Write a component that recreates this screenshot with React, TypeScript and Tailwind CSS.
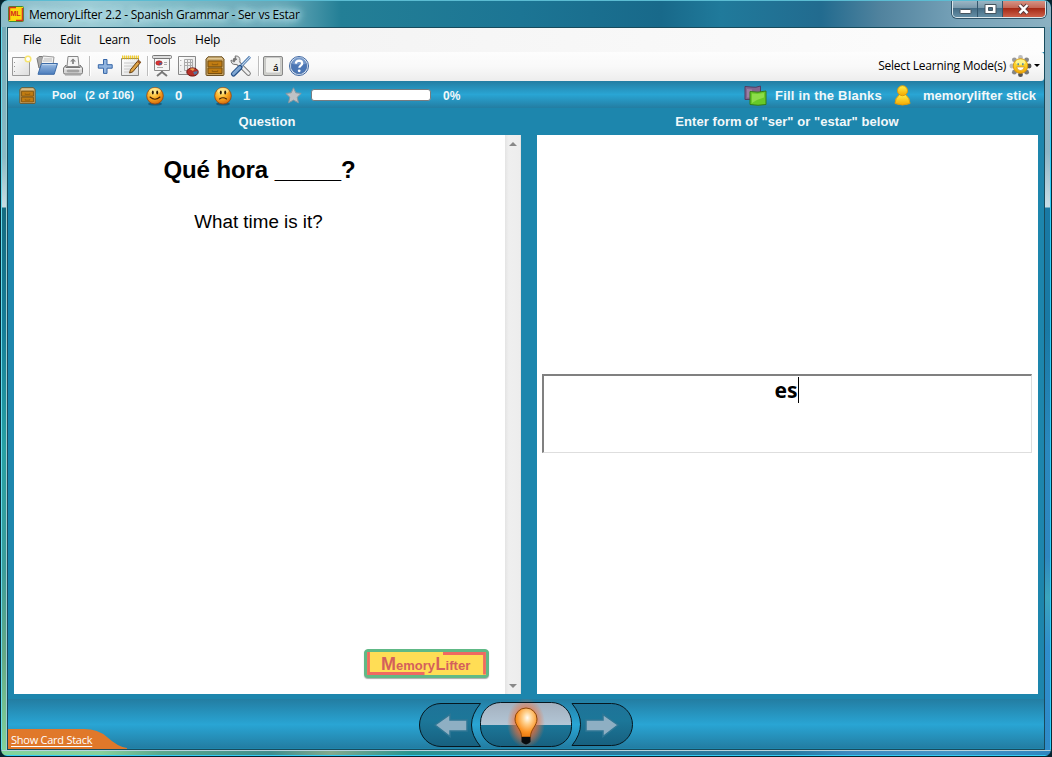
import type { ReactNode } from "react";

const ui = "font-['Open_Sans','Noto_Sans',sans-serif]";
const arial = "font-['Liberation_Sans',Arial,sans-serif]";

function Defs() {
  return (
    <svg className="absolute h-0 w-0" aria-hidden="true">
      <defs>
        <radialGradient id="face" cx="0.4" cy="0.3" r="0.75">
          <stop offset="0" stopColor="#ffe97a" />
          <stop offset="0.5" stopColor="#fbab22" />
          <stop offset="1" stopColor="#cf640c" />
        </radialGradient>
        <linearGradient id="paper" x1="0" y1="0" x2="1" y2="1">
          <stop offset="0" stopColor="#ffffff" />
          <stop offset="1" stopColor="#dcdcdc" />
        </linearGradient>
        <linearGradient id="blue" x1="0" y1="0" x2="0" y2="1">
          <stop offset="0" stopColor="#9dbde3" />
          <stop offset="1" stopColor="#4a7cbc" />
        </linearGradient>
        <linearGradient id="gold" x1="0" y1="0" x2="0" y2="1">
          <stop offset="0" stopColor="#fff04a" />
          <stop offset="1" stopColor="#f5a800" />
        </linearGradient>
        <linearGradient id="dim" x1="0" y1="0" x2="0" y2="1">
          <stop offset="0" stopColor="#1f7398" />
          <stop offset="0.4" stopColor="#1c7799" />
          <stop offset="1" stopColor="#17607f" />
        </linearGradient>
        <linearGradient id="shine" x1="0" y1="0" x2="0" y2="1">
          <stop offset="0" stopColor="#a3b0be" />
          <stop offset="1" stopColor="#b3c6d6" />
        </linearGradient>
        <linearGradient id="lower" x1="0" y1="0" x2="0" y2="1">
          <stop offset="0.5" stopColor="#1c7799" />
          <stop offset="1" stopColor="#17607f" />
        </linearGradient>
        <radialGradient id="bulb" cx="0.56" cy="0.34" r="0.6">
          <stop offset="0" stopColor="#fffdf5" />
          <stop offset="0.35" stopColor="#ffd08c" />
          <stop offset="0.8" stopColor="#fb9426" />
          <stop offset="1" stopColor="#ef8117" />
        </radialGradient>
        <radialGradient id="glow">
          <stop offset="0.3" stopColor="#ff6a20" stopOpacity="1" />
          <stop offset="0.65" stopColor="#f0703a" stopOpacity="0.55" />
          <stop offset="1" stopColor="#f0703a" stopOpacity="0" />
        </radialGradient>
      </defs>
    </svg>
  );
}

function Cabinet({ size }: { size: number }) {
  return (
    <svg width={size} height={size} viewBox="0 0 20 20">
      <path d="M3 .8h14l2 2.4v15.3q0 1-1 1H2q-1 0-1-1V3.2z" fill="#c7a568" stroke="#6d5020" />
      <path d="M3.4 1.8h13.2l1 1.5H2.4z" fill="#e0c795" />
      <path d="M3 5h14v5.8H3zM3 12h14v5.5H3z" fill="#c17c12" stroke="#7a500e" />
      <path d="M7.300 7.500v1.200h5.400V7.500M7.300 14.300v1.200h5.400v-1.200" fill="none" stroke="#8a5a10" strokeWidth=".9" />
    </svg>
  );
}

function Face({ sad = false }: { sad?: boolean }) {
  return (
    <svg width="20" height="20" viewBox="0 0 20 20">
      <ellipse cx="10" cy="18" rx="7" ry="1.6" fill="#0b4560" opacity=".6" />
      <circle cx="10" cy="9.8" r="8.3" fill="url(#face)" stroke="#9a4208" strokeWidth=".8" />
      <ellipse cx="10" cy="4.8" rx="5.800" ry="3" fill="#fff5a8" opacity=".65" />
      <ellipse cx="7.800" cy="6.600" rx="1" ry="2" fill="#2c1804" />
      <ellipse cx="12.2" cy="6.600" rx="1" ry="2" fill="#2c1804" />
      <path
        d={sad ? "M6.500 13q3.500-2.400 7 0" : "M5 11q5 4.400 10 0"}
        fill="none" stroke="#4a2504" strokeWidth="1.1" strokeLinecap="round"
      />
    </svg>
  );
}

function Tool({ label, children, className }: { label: string; children: ReactNode; className: string }) {
  return (
    <button aria-label={label} className={`block shrink-0 ${className}`}>
      <svg width="24" height="24" viewBox="0 0 24 24">{children}</svg>
    </button>
  );
}

function TitleBar() {
  return (
    <header className="relative flex h-[27px] shrink-0 items-start overflow-hidden rounded-t-[7px] border-t border-[#5bbcd2] bg-[linear-gradient(90deg,#8dbcc9_0,#9ccbd5_90px,#7eb9c5_180px,#63a6b6_285px,#237f96_340px,#1c7594_520px,#18698a_660px,#207a9b_720px,#226b8f_820px,#51839e_880px,#78a3b9_960px,#8bb1c2_1050px)]">
      <div className="flex h-[26px] items-center pl-[7px]">
        <svg width="16" height="16" viewBox="0 0 16 16">
          <rect x=".5" y=".5" width="15" height="15" rx="1" fill="#fbd90d" stroke="#3b8b38" />
          <path d="M1.500 14V1.500H8M8 14.500h6.500V2" fill="none" stroke="#d63217" strokeWidth="1.500" />
          <text x="2.500" y="10.300" fontSize="7" fontWeight="700" fill="#d5281c" fontFamily="Liberation Sans">ML</text>
        </svg>
        <h1 className={`${ui} relative ml-[5px] w-[278px] whitespace-nowrap pt-px text-[12px] leading-[18px] tracking-[-0.23px] text-black [text-shadow:0_0_6px_#c6e9f0,0_0_8px_#c6e9f0,0_0_10px_#b4dce5,0_0_12px_#b4dce5]`}>
          MemoryLifter 2.2 - Spanish Grammar - Ser vs Estar
        </h1>
      </div>
      <div className="ml-auto mr-[5px] mt-[-1px] flex h-[18px] w-[94px] overflow-hidden rounded-b-[5px] border border-t-0 border-[#dce9ed] shadow-[0_0_0_1px_#305368]">
        <button aria-label="Minimize" className="flex h-full w-[25px] items-center justify-center border-r border-[#32566c] bg-[linear-gradient(#a0bac8_0,#7898aa_48%,#456d85_50%,#638da4)]">
          <svg width="13" height="14"><rect x="1" y="7.500" width="11" height="4" rx=".5" fill="#fff" stroke="#46555f" /></svg>
        </button>
        <button aria-label="Restore" className="flex h-full w-[25px] items-center justify-center border-r border-[#32566c] bg-[linear-gradient(#a0bac8_0,#7898aa_48%,#456d85_50%,#638da4)]">
          <svg width="13" height="14"><path d="M1 2.500h11v9H1zM4.500 5.500h4v3h-4z" fill="#fff" fillRule="evenodd" stroke="#46555f" /></svg>
        </button>
        <button aria-label="Close" className="flex h-full flex-1 items-center justify-center bg-[linear-gradient(#d79a8c_0,#c46452_48%,#a52a16_50%,#cc6049)] pr-[2px]">
          <svg width="15" height="14"><path d="m3.500 3 8 8.200m0-8.200-8 8.200" stroke="#593a3c" strokeWidth="4.300" /><path d="m3.500 3 8 8.200m0-8.200-8 8.200" stroke="#fff" strokeWidth="2.500" /></svg>
        </button>
      </div>
    </header>
  );
}

function MenuBar() {
  return (
    <nav className={`${ui} flex h-6 shrink-0 items-center bg-gradient-to-r from-[#f0f0f0] to-[#fdfdfd] pl-[15px] text-[12px] tracking-[-0.2px] text-black`}>
      <span className="w-[37px]">File</span>
      <span className="w-[39px]">Edit</span>
      <span className="w-12">Learn</span>
      <span className="w-12">Tools</span>
      <span>Help</span>
    </nav>
  );
}

function Toolbar() {
  return (
    <div className="flex h-[29px] shrink-0 items-center rounded-r-[3px] bg-gradient-to-b from-[#fdfdfd] via-[#f9f9f9] to-[#ededed] pb-[2px] pl-px">
      <Tool label="New" className="w-[26px]">
        <path d="M3.500 3.500h17v18h-17z" fill="url(#paper)" stroke="#999" />
        <path d="M5.500 8v1m0 3v1m0 4v1" stroke="#999" />
        <circle cx="19" cy="5" r="2.800" fill="#fff" stroke="#f7e56e" strokeWidth="1.500" />
      </Tool>
      <Tool label="Open" className="w-[26px]">
        <path d="M2 4.500 4 2.500h5l1 1.500h8v10H4z" fill="#aaa" stroke="#777" />
        <path d="m7 5 1-3 11 1-1 8H6z" fill="#f2f2f2" stroke="#999" />
        <path d="M9 5h8M8 7h9" stroke="#bbb" />
        <path d="M6.500 9.500h16l-3.300 10.800H3z" fill="url(#blue)" stroke="#3c6ba8" />
        <path d="M7.300 10.600H21" stroke="#c4d9ef" />
      </Tool>
      <Tool label="Print" className="w-[28px]">
        <path d="M7 2.500h10l1 10H6z" fill="#f5f5f5" stroke="#888" />
        <path d="M12 5v5" stroke="#888" strokeWidth="1.800" />
        <path d="m9 7.500 3-3 3 3z" fill="#888" />
        <path d="m5 11-2.500 3v4.500q0 1.500 1.500 1.500h16q1.500 0 1.500-1.500V14L19 11v2.500H5z" fill="#d5d5d5" stroke="#777" />
        <path d="M3.500 14.800h17" stroke="#fff" />
        <rect x="6" y="16" width="12" height="2" rx="1" fill="#aaa" stroke="#888" strokeWidth=".5" />
        <path d="M4 21h16" stroke="#999" />
      </Tool>
      <Separator />
      <Tool label="Add" className="ml-[3px] w-[26px]">
        <path d="M10.500 5.500h3.500v5.200h5.200v3.500H14v5.200h-3.500v-5.200H5.300v-3.500h5.200z" fill="#91b4df" stroke="#3767a8" />
      </Tool>
      <Tool label="Edit" className="w-[28px]">
        <path d="M2.500 4.500h17v17h-17z" fill="url(#paper)" stroke="#888" />
        <path d="M5 9h12M5 12h12M5 15h10M5 18h9" stroke="#c8c8c8" />
        <path d="M3 3.500h17" stroke="#c49a09" strokeWidth="3.600" strokeDasharray="1.200 .8" />
        <path d="M3 3h17" stroke="#f3d12f" strokeWidth="2.400" strokeDasharray="1.200 .8" />
        <path d="m19.400 6.200 2.400 2-8 9.600-3.200 1.200.8-3.200z" fill="#dfa344" stroke="#664010" />
        <path d="m19.400 6.200 2.400 2-1.400 1.600-2.500-2z" fill="#9b5a2b" />
      </Tool>
      <Separator />
      <Tool label="Presentation" className="ml-[2px] w-[26px]">
        <path d="M12 16v3M7 22l5-4 5 4" fill="none" stroke="#777" strokeWidth="2" />
        <path d="M4.500 4.500h15v12h-15z" fill="#f6f6f6" stroke="#888" />
        <rect x="2.500" y="1.500" width="19" height="3" rx="1" fill="#ddd" stroke="#777" />
        <ellipse cx="9" cy="9" rx="3.200" ry="2.200" fill="#d33" stroke="#922" strokeWidth=".6" />
        <path d="m9 9 3-.5q0 2-2 2.400z" fill="#36a" />
        <path d="M14 8.500h3M14 10.500h3M7 13.500h6" stroke="#aaa" />
      </Tool>
      <Tool label="Statistics" className="w-[27px]">
        <path d="M2.500 2.500h17v18h-17z" fill="url(#paper)" stroke="#888" />
        <path d="M8.500 5.500h8v11h-8zM11.500 5.500v11M14.500 5.500v11M8 8.500h9M8 11.500h9" fill="none" stroke="#aaa" />
        <path d="M4.800 6v1m0 4v1m0 5v1" stroke="#999" />
        <ellipse cx="16.500" cy="18" rx="5.700" ry="4.100" fill="#b72f28" stroke="#701714" />
        <path d="m17 17-3.400-2q3-1.600 5 0z" fill="#eaa04b" />
        <path d="m17 18 4.500-1q.5 3-3 3.800z" fill="#5277a3" />
      </Tool>
      <button aria-label="Card boxes" className="flex w-[26px] shrink-0 pl-[2px]"><Cabinet size={20} /></button>
      <Tool label="Options" className="w-[29px]">
        <path d="m6 6 13.500 13.500" stroke="#777" strokeWidth="4.600" strokeLinecap="round" />
        <path d="M6 2q5-.5 5 4.500t-5 4q-4 0-4-4.500l3 2 2.500-2z" fill="#e6e6e6" stroke="#777" />
        <path d="m7.500 7.500 12 12" stroke="#eee" strokeWidth="2.800" strokeLinecap="round" />
        <path d="m21 2.800-9.600 10" stroke="#4372ab" strokeWidth="2.800" />
        <path d="m21 2.800-9.600 10" stroke="#c5d8eb" strokeWidth="1.200" />
        <path d="m11 13.500-6.500 6.500" stroke="#244f87" strokeWidth="5.200" strokeLinecap="round" />
        <path d="m10.800 13.500-6.300 6.300" stroke="#7fa7d3" strokeWidth="3" strokeLinecap="round" />
      </Tool>
      <Separator />
      <Tool label="Character map" className="ml-[2px] w-[26px]">
        <rect x="2.500" y="2.500" width="19" height="19" rx="1.500" fill="#cfd0cb" stroke="#888" />
        <rect x="4.500" y="3.500" width="15" height="15.500" rx="1.500" fill="#f1f1ee" stroke="#bbb" strokeWidth=".7" />
        <text x="12" y="16.500" fontSize="9.500" fontWeight="600" fontFamily="Open Sans">á</text>
      </Tool>
      <Tool label="Help" className="w-[26px]">
        <circle cx="12" cy="12" r="9.500" fill="#dce7f4" stroke="#3f66a0" />
        <circle cx="12" cy="12" r="7.800" fill="#4c77b5" stroke="#385f9b" strokeWidth=".6" />
        <path d="M5 10a7 7 0 0 1 14 0q-7 1-14 0" fill="#86a7d4" opacity=".7" />
        <path d="M8.800 9.600q.3-3 3.400-3 3 .1 3 2.800c0 2.200-2.900 2.200-2.900 4.300" fill="none" stroke="#fff" strokeWidth="2.200" />
        <circle cx="12.200" cy="16.800" r="1.400" fill="#fff" />
      </Tool>
      <div className={`${ui} ml-auto flex items-center pr-[4px] text-[12px] tracking-[-0.23px] text-black`}>
        <span className="whitespace-nowrap">Select Learning Mode(s)</span>
        <svg className="ml-[3px]" width="23" height="24" viewBox="0 0 24 24">
          <g fill="#858585">
            <circle cx="12" cy="3" r="2.500" fill="#bbb" /><circle cx="18.400" cy="5.600" r="2.500" /><circle cx="21" cy="12" r="2.500" fill="#555" /><circle cx="18.400" cy="18.400" r="2.500" fill="#777" /><circle cx="12" cy="21" r="2.500" fill="#555" /><circle cx="5.600" cy="18.400" r="2.500" /><circle cx="3" cy="12" r="2.500" fill="#bbb" /><circle cx="5.600" cy="5.600" r="2.500" fill="#999" />
          </g>
          <circle cx="12" cy="12" r="7.600" fill="url(#gold)" stroke="#d99710" />
          <ellipse cx="12" cy="8" rx="5" ry="2.800" fill="#fffcab" opacity=".7" />
          <path d="M9.600 9v2.200M14.400 9v2.200" stroke="#548aa3" strokeWidth="1.600" />
          <path d="M8 13h8q-.7 3.800-4 3.800T8 13" fill="#fff" stroke="#cb8c12" strokeWidth=".7" />
        </svg>
        <svg className="ml-[2px]" width="6" height="3"><path d="M0 0h6L3 3z" fill="#000" /></svg>
      </div>
    </div>
  );
}

function Separator() {
  return <span className="h-5 w-px shrink-0 bg-[#bdbdbd] shadow-[1px_0_#fff]" />;
}

function StatusBar() {
  return (
    <div className={`${arial} flex h-[27px] shrink-0 items-center bg-[linear-gradient(#237da2,#29a5d4_50%,#237da2)] pt-[2px] text-[13px] font-bold text-[#f2f8fa]`}>
      <div className="flex w-[44px] pb-px pl-[11px]"><Cabinet size={17} /></div>
      <span className="w-[33px] text-[11px] tracking-[0.1px]">Pool</span>
      <span className="w-[60px] whitespace-nowrap text-[11px] tracking-[0.1px]">(2 of 106)</span>
      <Face />
      <span className="ml-[10px] w-[38px]">0</span>
      <Face sad />
      <span className="ml-[10px] w-[42px]">1</span>
      <svg className="mb-px" width="17" height="17" viewBox="0 0 17 17"><path d="m8.500.8 2.300 5 5.400.6-4 3.800 1.200 5.600-4.900-2.700-4.900 2.700 1.200-5.600-4-3.800 5.400-.6z" fill="#bfc2c5" stroke="#8b979f" /></svg>
      <div className="mb-px ml-[9px] h-[12px] w-[120px] rounded-[3px] border border-[#777c80] bg-white" />
      <span className="ml-3 text-[12px]">0%</span>
      <div className="ml-auto flex items-center pr-2">
        <svg width="23" height="21" viewBox="0 0 23 21">
          <path d="m1 1.500 6 .5q5 1 9.500-1v13L1 14.500z" fill="#83668f" stroke="#533b60" />
          <path d="m3 4 5 .5v8H3z" fill="#b39abb" opacity=".5" />
          <path d="M6 6.500q8 1.500 16-.5v13.500q-8 1.500-16 0z" fill="#68c928" stroke="#347d15" />
          <path d="M8 8.500q6 1 12-.4v4.400Q14 14 8 18z" fill="#a1e75b" opacity=".65" />
        </svg>
        <span className="ml-[8px] whitespace-nowrap tracking-[0.2px]">Fill in the Blanks</span>
        <svg className="ml-[12px]" width="17" height="21" viewBox="0 0 17 21">
          <path d="M5.500 9.500Q1 13 1 18.500q7.500 3 15 0Q16 13 11.500 9.500z" fill="url(#gold)" stroke="#dc9b0c" />
          <circle cx="8.500" cy="5.700" r="5" fill="url(#gold)" stroke="#dc9b0c" />
        </svg>
        <span className="ml-[12px] whitespace-nowrap tracking-[0.06px]">memorylifter stick</span>
      </div>
    </div>
  );
}

function QuestionPanel() {
  return (
    <section className={`${arial} flex w-[507px] shrink-0 bg-white text-black`}>
      <div className="flex min-w-0 flex-1 flex-col items-center">
        <h2 className="mt-[20px] text-[24px] font-bold leading-[30px] tracking-[-0.08px]">Qué hora _____?</h2>
        <p className="mt-[25px] pr-[2px] text-[18.8px] leading-[24px]">What time is it?</p>
        <div className="mb-[16px] ml-auto mr-[16px] mt-auto flex h-[29px] w-[125px] rounded-[4px] border border-[#60b986] bg-[#60b986] p-[2px] shadow-[0_1px_1px_#aaa]">
          <svg width="119" height="23" viewBox="0 0 119 23">
            <path d="M0 0h119v23H0z" fill="#ffdd55" />
            <path d="M1.500 0v21.500h56M76 1.500h41.500v21" fill="none" stroke="#ef6961" strokeWidth="2.800" />
            <g fill="#d4605c" fontFamily="Liberation Sans" fontWeight="700">
              <text x="14" y="18" fontSize="18" textLength="15" lengthAdjust="spacingAndGlyphs">M</text>
              <text x="29" y="18" fontSize="13" textLength="39" lengthAdjust="spacingAndGlyphs">emory</text>
              <text x="68.500" y="18" fontSize="18" textLength="10" lengthAdjust="spacingAndGlyphs">L</text>
              <text x="78.500" y="18" fontSize="13" textLength="25" lengthAdjust="spacingAndGlyphs">ifter</text>
            </g>
          </svg>
        </div>
      </div>
      <div className="flex w-[16px] flex-col items-center justify-between border-r border-[#e2e2e2] bg-[linear-gradient(90deg,#e4e4e4,#efefef_25%,#ededed)] pb-[6px] pt-[7px]">
        <svg width="8" height="4"><path d="M4 0 8 4H0z" fill="#888" /></svg>
        <svg width="8" height="4"><path d="M0 0h8L4 4z" fill="#888" /></svg>
      </div>
    </section>
  );
}

function AnswerPanel() {
  return (
    <section className="w-[501px] shrink-0 bg-white pl-[5px] pt-[239px]">
      <div className="flex h-[79px] w-[490px] items-start justify-center border border-l-2 border-t-2 border-b-[#dedede] border-l-[#808080] border-r-[#dedede] border-t-[#808080] bg-white pr-[2px]">
        <span className="mt-px font-['Noto_Sans','Open_Sans',sans-serif] text-[21px] font-bold leading-[27px] text-black">es</span>
        <span className="mt-px h-[26px] w-px bg-black" />
      </div>
    </section>
  );
}

function NavButtons() {
  return (
    <div className="flex h-[49px] justify-center pr-px">
      <svg width="216" height="49" viewBox="0 0 216 49">
        <path d="M62.500 4.500H23a21.500 21.500 0 0 0 0 43h39.500Q44.500 26 62.500 4.500z" fill="url(#dim)" stroke="#06171f" />
        <path d="M17 26 32 15.500v5.500h17v11H32v5.500z" fill="#8eafc3" stroke="#2f7795" strokeWidth="1.500" />
        <path d="M154 4.500h39.500a21 21 0 0 1 0 42H154Q171 25 154 4.500z" fill="url(#dim)" stroke="#06171f" />
        <path d="M200 26 185 15.500v5.500h-17v11h17v5.500z" fill="#8eafc3" stroke="#2f7795" strokeWidth="1.500" />
        <rect x="62.500" y="3.500" width="91" height="44" rx="20" fill="url(#lower)" />
        <path d="M62.500 26v-2.500a20 20 0 0 1 20-20h51a20 20 0 0 1 20 20V26z" fill="url(#shine)" />
        <ellipse cx="108" cy="24" rx="19" ry="25" fill="url(#glow)" />
        <path d="M103.500 38c0-8-6.500-11-6.500-18a11 11 0 0 1 22 0c0 7-6.500 10-6.500 18z" fill="url(#bulb)" stroke="#8b4709" />
        <path d="M103.500 38h9v5l-2 1.500-2.500 1-2.500-1-2-1.500z" fill="#080b0e" />
        <rect x="62.500" y="3.500" width="91" height="44" rx="20" fill="none" stroke="#06171f" />
      </svg>
    </div>
  );
}

export default function App() {
  return (
    <div className="h-[757px] w-[1052px] overflow-hidden bg-[#07242e]">
      <Defs />
      <div className="flex h-[756px] w-full flex-col overflow-hidden rounded-[7px] border-x border-[#062a38]">
        <TitleBar />
        <div className="flex h-[723px] shrink-0">
          <div className="w-[6px] shrink-0 border-l border-[#65dcee] bg-[linear-gradient(#75abb8_0,#8bbbc6_130px,#c7dce3_180px,#156b80_181px,#167d97_300px,#28a0a3_420px,#3b9d9b_540px,#65a985_630px,#82d29a)]" />
          <div className="flex w-[1038px] shrink-0 flex-col border border-[#174b5d] bg-[#1d86ad] shadow-[-1px_0_#9eced1,1px_0_#a4c8d5]">
            <MenuBar />
            <Toolbar />
            <StatusBar />
            <div className={`${arial} flex h-[27px] shrink-0 items-center text-[13px] font-bold tracking-[0.06px] text-[#f2f8fa]`}>
              <span className="w-[518px] shrink-0 text-center">Question</span>
              <span className="w-[518px] shrink-0 pl-[4px] text-center">Enter form of "ser" or "estar" below</span>
            </div>
            <main className="flex h-[559px] shrink-0 gap-[16px] pl-[6px]">
              <QuestionPanel />
              <AnswerPanel />
            </main>
            <div className="mt-[5px] grid h-[49px] shrink-0 bg-[linear-gradient(#237da2,#29a5d4_52%,#237da2)]">
              <div className="col-start-1 row-start-1"><NavButtons /></div>
              <a className="relative col-start-1 row-start-1 flex h-[19px] w-[121px] self-end">
                <svg className="absolute" width="121" height="20"><path d="M0 0h76q14 0 23 8 11 10 20 11v1H0z" fill="#e0782a" /></svg>
                <span className={`${ui} relative ml-[3px] mt-[2px] whitespace-nowrap text-[11px] leading-[18px] tracking-[-0.25px] text-white underline underline-offset-2`}>Show Card Stack</span>
              </a>
            </div>
          </div>
          <div className="flex-1 border-r border-[#31cdf8] bg-[linear-gradient(#84adbf_0,#8db5c5_125px,#c8dee7_180px,#1979a4_181px,#1979a4_300px,#2a88be_420px,#2f87c0_530px,#3ba5bd_570px,#308dcc_620px,#2e8bc9)]" />
        </div>
        <div className="h-[6px] shrink-0 border-b border-t border-b-[#31cdf8] border-t-[#b5d3dc] bg-[linear-gradient(90deg,#80d49c_0,#87d19b_100px,#5aa98e_160px,#3e8e8e_270px,#83aa8d_330px,#279590_410px,#328ca0_500px,#2c7a9b_600px,#277ba1_790px,#3c8bc1_850px,#4195c6_950px,#2e86c0_1050px)]" />
      </div>
    </div>
  );
}
